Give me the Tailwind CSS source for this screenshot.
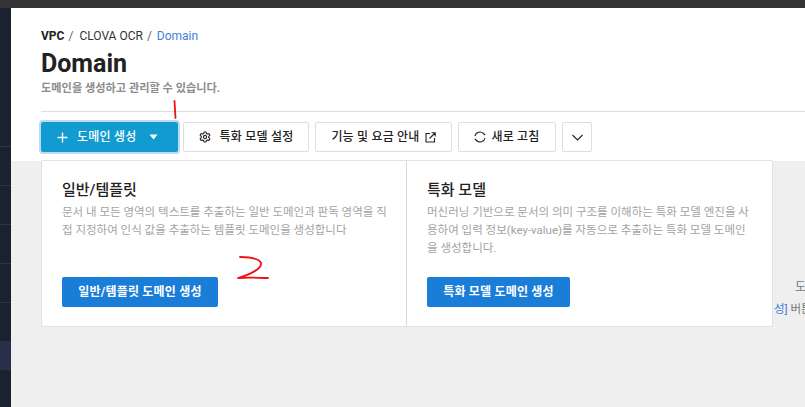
<!DOCTYPE html>
<html lang="ko">
<head>
    <meta charset="UTF-8">
    <title>Domain</title>
    <script src="https://cdn.jsdelivr.net/npm/@tailwindcss/browser@4"></script>
</head>
<body class="bg-[#efefef] overflow-hidden">
<div class="relative w-[805px] h-[407px] overflow-hidden flex flex-col font-['Roboto','Noto_Sans_CJK_KR',sans-serif]">
    <div class="h-2 bg-[#333333] shrink-0"></div>
    <div class="flex flex-1">
        <!-- sidebar -->
        <div class="w-[11px] bg-[#1b212e] pt-[138px] flex flex-col">
            <div class="h-[39px] border-t border-[#2c3550]"></div>
            <div class="h-[39px] border-t border-[#2c3550]"></div>
            <div class="h-[39px] border-t border-[#2c3550]"></div>
            <div class="h-[39px] border-t border-[#2c3550]"></div>
            <div class="h-[39px] border-t border-[#2c3550]"></div>
            <div class="h-[29px] bg-[#293049]"></div>
        </div>
        <!-- main -->
        <div class="flex-1 relative">
            <div class="bg-white h-[153px] pl-[30px] pt-[20px]">
                <div class="flex items-center h-[15px] text-[12px] text-[#333333]">
                    <span class="font-bold text-[#222222]">VPC</span>
                    <span class="ml-[4px] text-[#666666]">/</span>
                    <span class="ml-[6px]">CLOVA OCR</span>
                    <span class="ml-[4px] text-[#666666]">/</span>
                    <span class="ml-[5px] text-[#3f7fd6]">Domain</span>
                </div>
                <h1 class="mt-[3px] text-[25px] leading-[35px] font-bold text-[#222222]">Domain</h1>
                <p class="text-[11.2px] leading-[16px] font-bold text-[#8c8c8c]">도메인을 생성하고 관리할 수 있습니다.</p>
                <div class="mt-[14px] border-t border-[#dedede]"></div>
                <div class="mt-[10px] flex text-[12px] tracking-[0.2px] font-medium text-[#222222]">
                    <button class="w-[137px] h-[30px] rounded-[2px] bg-[#129bd1] text-white ring-2 ring-[#b9dcf2] flex items-center pl-[15px]">
                        <svg class="w-[13px] h-[13px]" viewBox="0 0 13 13" fill="none" stroke="white" stroke-width="1.3"><path d="M6.5 1.5v10M1.5 6.5h10"/></svg>
                        <span class="ml-[8px]">도메인 생성</span>
                        <svg class="w-[9px] h-[6px] ml-[13px]" viewBox="0 0 9 6" fill="white"><path d="M0.5 0.5h8L4.5 5.5z"/></svg>
                    </button>
                    <button class="ml-[5px] w-[126px] h-[30px] rounded-[2px] border border-[#dedede] bg-white flex items-center justify-center">
                        <svg class="w-[12px] h-[12px]" viewBox="0 0 24 24" fill="none" stroke="#222222" stroke-width="2.2" stroke-linejoin="round"><path d="M10 2h4l.6 3 2.2 1.2 2.9-1 2 3.5-2.3 2 0 2.6 2.3 2-2 3.5-2.9-1-2.2 1.2-.6 3h-4l-.6-3-2.2-1.2-2.9 1-2-3.5 2.3-2 0-2.6-2.3-2 2-3.5 2.9 1L9.400 5z"/><circle cx="12" cy="12" r="3.2"/></svg>
                        <span class="ml-[9px]">특화 모델 설정</span>
                    </button>
                    <button class="ml-[6px] w-[137px] h-[30px] rounded-[2px] border border-[#dedede] bg-white flex items-center justify-center">
                        <span>기능 및 요금 안내</span>
                        <svg class="w-[11px] h-[11px] ml-[5px]" viewBox="0 0 11 11" fill="none" stroke="#222222" stroke-width="1.1"><path d="M5 1.500H1v8.500h8.500V6M6.500 .8h3.700v3.700M10 1 4.500 6.500"/></svg>
                    </button>
                    <button class="ml-[6px] w-[98px] h-[30px] rounded-[2px] border border-[#dedede] bg-white flex items-center justify-center">
                        <svg class="w-[12px] h-[12px]" viewBox="0 0 12 12" fill="none" stroke="#222222" stroke-width="1.1"><path d="M1 5a5 5 0 0 1 8.500-2.500L11 4M11 7a5 5 0 0 1-8.500 2.500L1 8"/></svg>
                        <span class="ml-[5px]">새로 고침</span>
                    </button>
                    <button class="ml-[6px] w-[30px] h-[30px] rounded-[2px] border border-[#dedede] bg-white flex items-center justify-center">
                        <svg class="w-[11px] h-[7px]" viewBox="0 0 11 7" fill="none" stroke="#222222" stroke-width="1.1"><path d="M.5 1 5.500 6l5-5"/></svg>
                    </button>
                </div>
            </div>
            <!-- text behind the menu, cut off at the right edge -->
            <p class="absolute left-[784px] top-[270px] text-[12px] text-[#777777] whitespace-nowrap">도</p>
            <p class="absolute left-[763px] top-[293px] text-[11.5px] text-[#777777] whitespace-nowrap"><span class="text-[#3f7fd6]">성]</span> 버튼</p>
            <!-- dropdown menu -->
            <div class="absolute left-[30px] top-[152px] w-[732px] h-[167px] bg-white border border-[#e2e2e2] rounded-[2px] flex">
                <div class="w-[365px] h-full border-r border-[#d9d9d9] pl-[20px] pr-[16px] pt-[19px] flex flex-col">
                    <h2 class="text-[15px] leading-[20px] font-medium text-[#222222]">일반/템플릿</h2>
                    <p class="mt-[3px] text-[11.5px] leading-[18px] break-all text-[#a3a3a3]">문서 내 모든 영역의 텍스트를 추출하는 일반 도메인과 판독 영역을 직접 지정하여 인식 값을 추출하는 템플릿 도메인을 생성합니다</p>
                    <button class="mt-auto mb-[19px] w-[156px] h-[30px] rounded-[2px] bg-[#1a7ed8] text-white text-[12px] tracking-[0.2px] font-bold">일반/템플릿 도메인 생성</button>
                </div>
                <div class="flex-1 pl-[20px] pr-[20px] pt-[19px] flex flex-col">
                    <h2 class="text-[15px] leading-[20px] font-medium text-[#222222]">특화 모델</h2>
                    <p class="mt-[3px] text-[11.5px] leading-[18px] break-all text-[#a3a3a3]">머신러닝 기반으로 문서의 의미 구조를 이해하는 특화 모델 엔진을 사용하여 입력 정보(key-value)를 자동으로 추출하는 특화 모델 도메인을 생성합니다.</p>
                    <button class="mt-auto mb-[19px] w-[143px] h-[30px] rounded-[2px] bg-[#1a7ed8] text-white text-[12px] tracking-[0.2px] font-bold">특화 모델 도메인 생성</button>
                </div>
            </div>
        </div>
    </div>
    <!-- red annotations drawn over the screenshot -->
    <svg class="absolute left-0 top-0 pointer-events-none" width="805" height="407" fill="none" stroke="#f01010" stroke-width="1.800" stroke-linecap="round" stroke-linejoin="round">
        <path d="M174.500 101 L175.500 118"/>
        <path d="M240 257 C250 257 259 259 261 263 C262 268 252 274 238 278 C250 277 258 278 268 278"/>
    </svg>
</div>
</body>
</html>
